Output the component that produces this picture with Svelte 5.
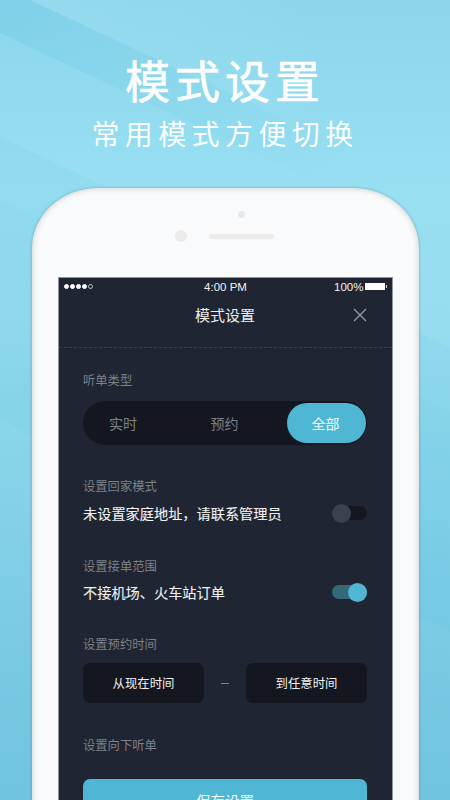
<script>
  const segments = [
    { label: '实时', active: false },
    { label: '预约', active: false },
    { label: '全部', active: true }
  ];
  const dots = [true, true, true, true, false];
</script>

<div class="page">
  <svg class="bands" viewBox="0 0 450 800" aria-hidden="true">
    <defs>
      <linearGradient id="fadeDark" x1="0" y1="0" x2="1" y2="0">
        <stop offset="0" stop-color="#45b6d8" stop-opacity="0.17" />
        <stop offset="0.75" stop-color="#45b6d8" stop-opacity="0" />
      </linearGradient>
      <linearGradient id="fadeLight" x1="0" y1="0" x2="1" y2="0">
        <stop offset="0" stop-color="#ffffff" stop-opacity="0.09" />
        <stop offset="0.7" stop-color="#ffffff" stop-opacity="0" />
      </linearGradient>
    </defs>
    <polygon points="30,0 450,197 450,0" fill="url(#fadeLight)" />
    <polygon points="0,0 30,0 450,197 450,245 0,33" fill="url(#fadeDark)" />
    <polygon points="0,137 450,348 450,800 0,800" fill="#3fb4d8" opacity="0.05" />
    <polygon points="0,200 450,411 450,800 0,800" fill="#3fb4d8" opacity="0.04" />
    <polygon points="0,420 450,631 450,800 0,800" fill="#ffffff" opacity="0.05" />
  </svg>

  <header class="hero">
    <h1>模式设置</h1>
    <p>常用模式方便切换</p>
  </header>

  <section class="phone">
    <div class="sensor"></div>
    <div class="hardware">
      <span class="camera"></span>
      <span class="speaker"></span>
    </div>

    <div class="screen">
      <div class="status">
        <span class="signal">
          {#each dots as on}
            <i class:on></i>
          {/each}
        </span>
        <span class="clock">4:00 PM</span>
        <span class="power">
          100%
          <span class="battery"></span>
        </span>
      </div>

      <nav class="nav">
        <span class="nav-title">模式设置</span>
        <svg class="close" viewBox="0 0 14 14" aria-hidden="true">
          <path d="M1 1 L13 13 M13 1 L1 13" />
        </svg>
      </nav>

      <div class="content">
        <div class="label first">听单类型</div>
        <div class="segment">
          {#each segments as s}
            <span class="seg" class:active={s.active}>{s.label}</span>
          {/each}
        </div>

        <div class="label home">设置回家模式</div>
        <div class="row row-home">
          <span>未设置家庭地址，请联系管理员</span>
          <span class="toggle"><i></i></span>
        </div>

        <div class="label range">设置接单范围</div>
        <div class="row row-range">
          <span>不接机场、火车站订单</span>
          <span class="toggle on"><i></i></span>
        </div>

        <div class="label time">设置预约时间</div>
        <div class="times">
          <span class="time-btn">从现在时间</span>
          <span class="dash"></span>
          <span class="time-btn">到任意时间</span>
        </div>

        <div class="label down">设置向下听单</div>
        <button class="save">保存设置</button>
      </div>
    </div>
  </section>
</div>

<style>
  :global(body) {
    margin: 0;
  }

  .page {
    position: relative;
    width: 450px;
    height: 800px;
    overflow: hidden;
    background: linear-gradient(180deg, #8bd6ec 0%, #98dff2 24%, #97ddf0 40%, #84d2ea 65%, #6fc3df 100%);
    font-family: "Noto Sans CJK SC", "Noto Sans", sans-serif;
  }

  .bands {
    position: absolute;
    inset: 0;
    width: 450px;
    height: 800px;
  }

  .hero {
    position: relative;
    height: 188px;
    color: #fff;
    text-align: center;
  }

  h1 {
    margin: 0;
    padding-top: 48px;
    font-size: 45px;
    line-height: 64px;
    font-weight: 400;
    letter-spacing: 5px;
    -webkit-text-stroke: 0.6px #fff;
  }

  .hero p {
    margin: 0;
    padding-top: 1px;
    font-size: 28px;
    line-height: 40px;
    font-weight: 400;
    letter-spacing: 5.4px;
    opacity: 0.95;
  }

  .phone {
    position: relative;
    width: 387px;
    height: 640px;
    margin: 0 auto;
    box-sizing: border-box;
    padding: 23px 26px 0;
    background: #f9fafc;
    border-radius: 66px 66px 0 0 / 60px 60px 0 0;
    box-shadow: 0 0 3px rgba(40, 70, 90, 0.35), inset 0 0 6px rgba(0, 0, 0, 0.2);
  }

  .sensor {
    width: 7px;
    height: 7px;
    margin-left: 180px;
    border-radius: 50%;
    background: #e8e8e9;
  }

  .hardware {
    display: flex;
    align-items: center;
    gap: 22px;
    height: 12px;
    margin: 12px 0 0 117px;
  }

  .camera {
    width: 12px;
    height: 12px;
    border-radius: 50%;
    background: #ebebec;
  }

  .speaker {
    width: 65px;
    height: 5px;
    border-radius: 3px;
    background: #ebebec;
  }

  .screen {
    box-sizing: border-box;
    width: 335px;
    height: 540px;
    margin-top: 35px;
    background: #1f2532;
    border: solid #8f939b;
    border-width: 1px 1px 0;
  }

  .status {
    display: grid;
    grid-template-columns: 1fr auto 1fr;
    align-items: center;
    height: 17px;
    padding: 0 6px 0 5px;
    color: #f1f2f3;
    font-family: "Liberation Sans", Arial, sans-serif;
    font-size: 11.5px;
  }

  .clock {
    padding-left: 2px;
  }

  .signal {
    display: flex;
    gap: 1px;
  }

  .signal i {
    box-sizing: border-box;
    width: 5px;
    height: 5px;
    border-radius: 50%;
    border: 1px solid #b9bcc2;
  }

  .signal i.on {
    background: #fff;
    border-color: #fff;
  }

  .power {
    display: flex;
    justify-content: flex-end;
    align-items: center;
    gap: 1px;
  }

  .battery {
    position: relative;
    width: 20px;
    height: 7px;
    background: #fff;
    margin-right: 1px;
  }

  .battery::after {
    content: "";
    position: absolute;
    right: -2px;
    top: 2px;
    width: 1px;
    height: 3px;
    background: #d8d9dc;
  }

  .nav {
    position: relative;
    display: flex;
    justify-content: center;
    align-items: center;
    height: 53px;
    border-bottom: 1px dashed #3a404c;
    color: #eceded;
    font-size: 15px;
    box-sizing: border-box;
  }

  .nav-title {
    position: relative;
    top: -7px;
  }

  .close {
    position: absolute;
    right: 24.5px;
    top: 13px;
    width: 14px;
    height: 14px;
  }

  .close path {
    fill: none;
    stroke: #9a9da4;
    stroke-width: 1.3;
  }

  .content {
    padding: 0 24.5px;
  }

  .label {
    color: #7d8189;
    font-size: 12.3px;
    line-height: 18px;
  }

  .first { padding-top: 23px; }
  .home { margin-top: 32px; }
  .range { margin-top: 34px; }
  .time { margin-top: 33px; }
  .down { margin-top: 33px; }

  .segment {
    display: grid;
    grid-template-columns: 80px 1fr 79px;
    align-items: stretch;
    box-sizing: border-box;
    height: 44px;
    margin-top: 12px;
    padding: 2px 1px;
    border-radius: 22px;
    background: #14171f;
  }

  .seg {
    display: flex;
    align-items: center;
    justify-content: center;
    padding-right: 2px;
    color: #7c8087;
    font-size: 14px;
    border-radius: 20px;
  }

  .seg.active {
    background: #4fb6d4;
    color: #f4fbfd;
  }

  .row {
    display: flex;
    justify-content: space-between;
    align-items: center;
    height: 20px;
    color: #f1f2f3;
    font-size: 14.2px;
    -webkit-text-stroke: 0.1px #f1f2f3;
  }

  .row-home { margin-top: 8px; }
  .row-range { margin-top: 7px; }

  .toggle {
    position: relative;
    width: 35px;
    height: 14px;
    border-radius: 7px;
    background: #14171f;
  }

  .toggle i {
    position: absolute;
    left: 0;
    top: -2.5px;
    width: 19px;
    height: 19px;
    border-radius: 50%;
    background: #3c4150;
  }

  .toggle.on {
    background: #35697a;
  }

  .toggle.on i {
    left: 16px;
    background: #4fb6d4;
  }

  .times {
    display: flex;
    align-items: center;
    justify-content: space-between;
    margin-top: 10px;
  }

  .time-btn {
    display: flex;
    align-items: center;
    justify-content: center;
    width: 121px;
    height: 40px;
    border-radius: 7px;
    background: #14171f;
    color: #eff0f1;
    font-size: 12.4px;
  }

  .dash {
    width: 8px;
    height: 1px;
    background: #7d8189;
  }

  .save {
    display: block;
    width: 284px;
    height: 42px;
    margin-top: 25px;
    padding: 0;
    border: none;
    border-radius: 7px;
    background: #4fb6d4;
    color: #f2fafc;
    font-family: inherit;
    font-size: 14.5px;
  }
</style>
